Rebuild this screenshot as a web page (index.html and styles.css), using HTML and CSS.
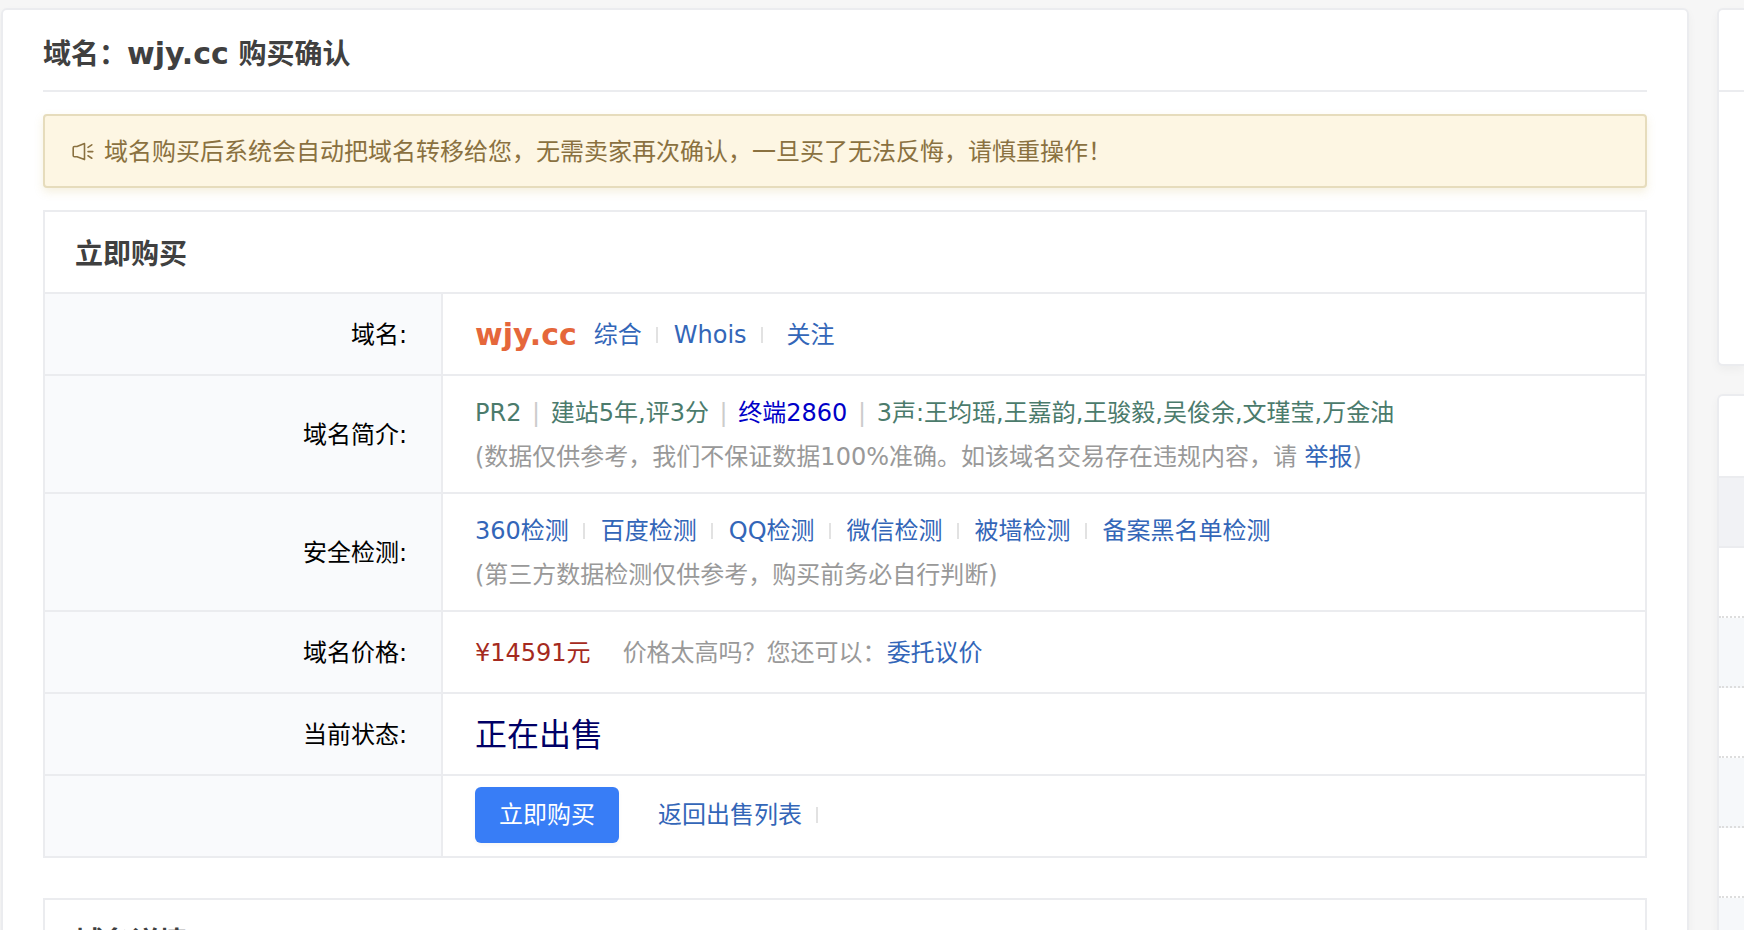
FILE: index.html
```html
<!DOCTYPE html>
<html lang="zh-CN">
<head>
<meta charset="utf-8">
<title>域名购买确认</title>
<link rel="stylesheet" href="styles.css">
</head>
<body>
<div class="layout">
  <main class="panel main">
    <h1 class="page-title">域名：<strong class="title-domain">wjy.cc</strong> 购买确认</h1>
    <div class="notice" role="alert">
      <svg class="notice-icon" viewBox="0 0 22 22" aria-hidden="true"><path d="M2.5 5.5H5L12.5 2.6V18.6L5 15.8H2.5Q1.2 15.8 1.2 14.5V6.8Q1.2 5.5 2.5 5.5ZM16 6.3L19.8 3.8M16 10.6H20.8M16 14.8L19.8 17.2"/></svg>
      <span>域名购买后系统会自动把域名转移给您，无需卖家再次确认，一旦买了无法反悔，请慎重操作！</span>
    </div>
    <table class="info">
      <thead>
        <tr><th class="info-head" colspan="2">立即购买</th></tr>
      </thead>
      <tbody>
        <tr>
          <th class="label" scope="row">域名:</th>
          <td class="value"><div class="line"><strong class="domain">wjy.cc</strong><a href="#">综合</a><i class="sep"></i><a href="#">Whois</a><i class="sep"></i><a class="follow" href="#">关注</a></div></td>
        </tr>
        <tr>
          <th class="label" scope="row">域名简介:</th>
          <td class="value">
            <div class="intro">PR2 <span class="bar">|</span> 建站5年,评3分 <span class="bar">|</span> <span class="terminal">终端2860</span> <span class="bar">|</span> 3声:王均瑶,王嘉韵,王骏毅,吴俊余,文瑾莹,万金油</div>
            <div class="muted">(数据仅供参考，我们不保证数据100%准确。如该域名交易存在违规内容，请 <a href="#">举报</a>)</div>
          </td>
        </tr>
        <tr>
          <th class="label" scope="row">安全检测:</th>
          <td class="value">
            <div class="line"><a href="#">360检测</a><i class="sep"></i><a href="#">百度检测</a><i class="sep"></i><a href="#">QQ检测</a><i class="sep"></i><a href="#">微信检测</a><i class="sep"></i><a href="#">被墙检测</a><i class="sep"></i><a href="#">备案黑名单检测</a></div>
            <div class="muted">(第三方数据检测仅供参考，购买前务必自行判断)</div>
          </td>
        </tr>
        <tr>
          <th class="label" scope="row">域名价格:</th>
          <td class="value"><div class="line"><span class="price">¥14591元</span><span class="muted">价格太高吗？您还可以：</span><a href="#">委托议价</a></div></td>
        </tr>
        <tr>
          <th class="label" scope="row">当前状态:</th>
          <td class="value"><div class="status">正在出售</div></td>
        </tr>
        <tr>
          <th class="label" scope="row"></th>
          <td class="value actions"><div class="line"><button class="buy" type="button">立即购买</button><a href="#">返回出售列表</a><i class="sep"></i></div></td>
        </tr>
      </tbody>
    </table>
    <table class="info">
      <thead>
        <tr><th class="info-head" colspan="2">域名详情</th></tr>
      </thead>
    </table>
  </main>
  <aside class="side">
    <section class="panel side-panel">
      <div class="side-head"></div>
      <div class="side-body"></div>
    </section>
    <section class="panel side-panel">
      <div class="side-head"></div>
      <div class="side-columns"></div>
      <ul class="side-list">
        <li></li><li></li><li></li><li></li><li></li><li></li>
      </ul>
    </section>
  </aside>
</div>
</body>
</html>
```
FILE: styles.css
```css
* { box-sizing: border-box; }

html, body { height: 100%; }

body {
  margin: 0;
  overflow: hidden;
  background: #f6f6f6;
  color: #000;
  font: 24px/44px "DejaVu Sans", "Noto Sans CJK SC", sans-serif;
}

a { color: #3366b8; text-decoration: none; }

.layout {
  display: grid;
  grid-template-columns: minmax(0, 1fr) 27px;
  gap: 28px;
  padding: 8px 0 0 1px;
}

.panel {
  background: #fff;
  border: 2px solid #ebecef;
  border-radius: 6px;
  box-shadow: 0 4px 10px rgba(0, 0, 0, 0.04);
}

.main { padding: 0 40px 40px; }

.page-title {
  margin: 0 0 22px;
  padding: 22px 0 13px;
  border-bottom: 2px solid #ebecef;
  color: #404040;
  font-size: 28px;
  line-height: 44px;
  font-weight: 600;
}

.title-domain { font-size: 30px; }

.notice {
  display: flex;
  align-items: center;
  gap: 10px;
  margin-bottom: 22px;
  padding: 14px 27px 12px;
  border: 2px solid #e6dcbc;
  border-radius: 4px;
  background: #fdf6e3;
  box-shadow: 0 4px 10px rgba(200, 170, 80, 0.18);
  color: #8a7140;
}

.notice-icon {
  width: 22px;
  height: 22px;
  fill: none;
  stroke: currentColor;
  stroke-width: 1.6;
  stroke-linecap: round;
  stroke-linejoin: round;
}

.info {
  width: 100%;
  margin-bottom: 40px;
  border-collapse: collapse;
}

.info th, .info td {
  height: 82px;
  border: 2px solid #ebecef;
}

.info .info-head {
  padding: 6px 30px 0;
  color: #404040;
  font-size: 28px;
  font-weight: 600;
  text-align: left;
}

.info .label {
  width: 398px;
  padding: 2px 34px 0;
  background: #f9fafc;
  font-weight: 400;
  text-align: right;
}

.info .value { padding: 15px 32px 13px; }
.info .actions { padding: 11px 32px 13px; }

.line { display: flex; align-items: center; }

.domain {
  margin-right: 17px;
  color: #e5673b;
  font-size: 30px;
}

.sep {
  width: 2px;
  height: 16px;
  margin: 0 16px 0 14px;
  background: #e2e2e2;
}

.follow { margin-left: 8px; }
.intro { color: #4b7b6c; }
.bar { margin: 0 3px; color: #ccc; }
.terminal { color: #0000c8; }
.muted { color: #999; }
.price { margin-right: 32px; color: #a52a20; }
.status { color: #000066; font-size: 32px; }

.buy {
  height: 56px;
  margin-right: 39px;
  padding: 0 24px;
  border: 0;
  border-radius: 6px;
  background: #387df6;
  box-shadow: 0 2px 4px rgba(0, 0, 0, 0.04);
  color: #fff;
  font: inherit;
}

.side-panel {
  margin-bottom: 28px;
  border-right: 0;
  border-radius: 6px 0 0 6px;
}

.side-head {
  height: 82px;
  border-bottom: 2px solid #ebecef;
}

.side-body { height: 272px; }

.side-columns {
  height: 70px;
  border-bottom: 2px solid #ebecef;
  background: #f1f2f5;
}

.side-list { margin: 0; padding: 0; list-style: none; }

.side-list li {
  height: 70px;
  border-bottom: 2px dotted #ddd;
}

.side-list li:nth-child(even) { background: #f6f8fa; }
```
